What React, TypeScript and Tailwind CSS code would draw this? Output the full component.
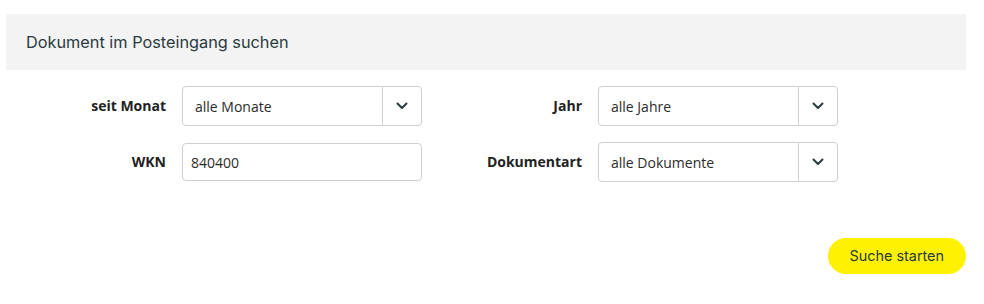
import React from 'react';

const labelFont = { fontFamily: '"Open Sans", "Liberation Sans", sans-serif' };
const headFont = { fontFamily: 'Inter, "Noto Sans", sans-serif' };

const Chevron = () => (
  <svg width="12" height="8" viewBox="0 0 12 8" fill="none">
    <polyline points="1.5,1.5 6,6 10.5,1.5" stroke="#2d3b3f" strokeWidth="2" strokeLinecap="round" strokeLinejoin="round" />
  </svg>
);

const SelectBox = ({ value }: { value: string }) => (
  <div className="flex h-[40px] w-[240px] items-stretch rounded-[4px] border border-[#cfcfcf] bg-white">
    <div className="flex flex-1 items-center pl-[12px] text-[14px] text-[#2b2b2b]">{value}</div>
    <div className="flex w-[39px] items-center justify-center border-l border-[#cfcfcf]">
      <Chevron />
    </div>
  </div>
);

const Field = ({ label, children }: { label: string; children: React.ReactNode }) => (
  <div className="flex items-center">
    <label className="w-[160px] pb-[2px] text-right text-[14px] font-bold text-[#222]">{label}</label>
    <div className="ml-[16px]">{children}</div>
  </div>
);

const App = () => {
  return (
    <div className="h-[304px] w-[984px] bg-white pt-[14px]" style={labelFont}>
      <div className="ml-[6px] w-[960px]">
        <div
          className="flex h-[56px] items-center bg-[#f3f3f3] pl-[20px] text-[16.3px] text-[#2a3a40]"
          style={headFont}
        >
          Dokument im Posteingang suchen
        </div>

        <div className="mt-[16px] flex flex-col gap-[16px]">
          <div className="flex">
            <Field label="seit Monat">
              <SelectBox value="alle Monate" />
            </Field>
            <Field label="Jahr">
              <SelectBox value="alle Jahre" />
            </Field>
          </div>
          <div className="flex">
            <Field label="WKN">
              <input
                className="h-[38px] w-[240px] rounded-[4px] border border-[#cfcfcf] px-[8px] text-[14px] text-[#2b2b2b] outline-none"
                defaultValue="840400"
              />
            </Field>
            <Field label="Dokumentart">
              <SelectBox value="alle Dokumente" />
            </Field>
          </div>
        </div>

        <div className="mt-[56px] flex justify-end">
          <button
            className="h-[36px] rounded-full bg-[#fff200] px-[22px] text-[14.4px] text-[#2a3a40]"
            style={headFont}
          >
            Suche starten
          </button>
        </div>
      </div>
    </div>
  );
};

export default App;
